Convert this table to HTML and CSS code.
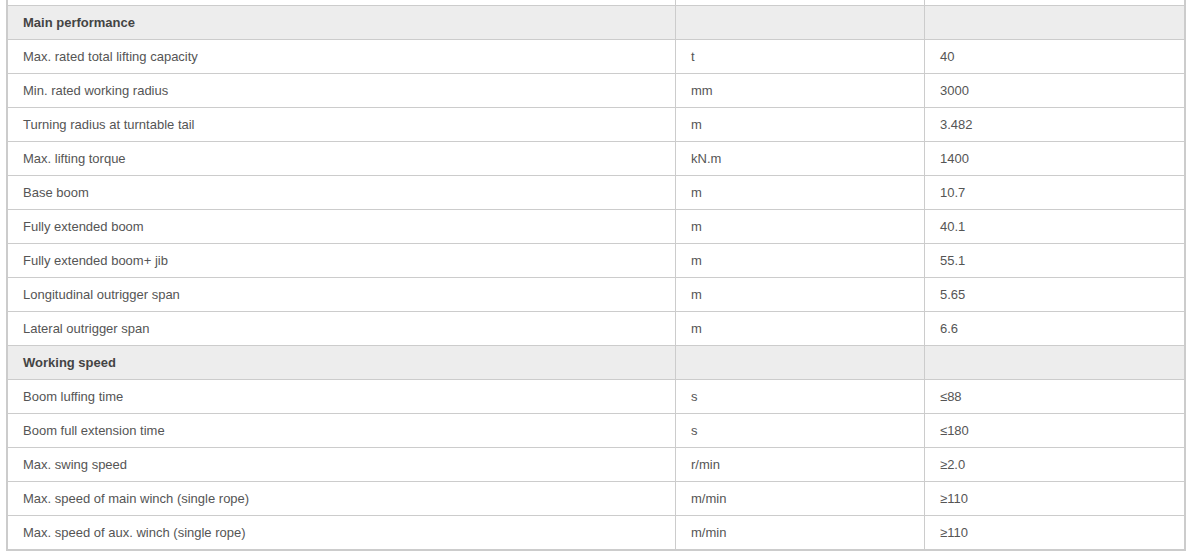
FILE: index.html
```html
<!DOCTYPE html>
<html lang="en">
<head>
<meta charset="utf-8">
<title>Specifications</title>
<link rel="stylesheet" href="styles.css">
</head>
<body>
<div class="spec-wrap">
<table class="spec">
<colgroup><col class="c1"><col class="c2"><col class="c3"></colgroup>
<tbody>
<tr class="prev"><td></td><td></td><td></td></tr>
<tr class="group"><td>Main performance</td><td></td><td></td></tr>
<tr><td>Max. rated total lifting capacity</td><td>t</td><td>40</td></tr>
<tr><td>Min. rated working radius</td><td>mm</td><td>3000</td></tr>
<tr><td>Turning radius at turntable tail</td><td>m</td><td>3.482</td></tr>
<tr><td>Max. lifting torque</td><td>kN.m</td><td>1400</td></tr>
<tr><td>Base boom</td><td>m</td><td>10.7</td></tr>
<tr><td>Fully extended boom</td><td>m</td><td>40.1</td></tr>
<tr><td>Fully extended boom+ jib</td><td>m</td><td>55.1</td></tr>
<tr><td>Longitudinal outrigger span</td><td>m</td><td>5.65</td></tr>
<tr><td>Lateral outrigger span</td><td>m</td><td>6.6</td></tr>
<tr class="group"><td>Working speed</td><td></td><td></td></tr>
<tr><td>Boom luffing time</td><td>s</td><td>≤88</td></tr>
<tr><td>Boom full extension time</td><td>s</td><td>≤180</td></tr>
<tr><td>Max. swing speed</td><td>r/min</td><td>≥2.0</td></tr>
<tr><td>Max. speed of main winch (single rope)</td><td>m/min</td><td>≥110</td></tr>
<tr class="last"><td>Max. speed of aux. winch (single rope)</td><td>m/min</td><td>≥110</td></tr>
</tbody>
</table>
</div>
</body>
</html>
```

FILE: styles.css
```css
html, body {
  margin: 0;
  padding: 0;
  background: #fff;
}
body {
  font-family: "Liberation Sans", Arial, sans-serif;
  font-size: 13px;
  color: #555;
}
.spec-wrap {
  padding-left: 6px;
  overflow: hidden;
  height: 556px;
}
.spec {
  margin-top: -28px;
  width: 1180px;
  table-layout: fixed;
  border-collapse: separate;
  border-spacing: 0;
  border-left: 2px solid #ccc;
  border-right: 2px solid #ccc;
  border-bottom: 2px solid #ccc;
}
.c1 { width: 668px; }
.c2 { width: 249px; }
.c3 { width: 259px; }
.spec td {
  padding: 0 15px;
  box-sizing: border-box;
  border-right: 1px solid #ccc;
  border-bottom: 1px solid #ccc;
  vertical-align: middle;
  line-height: 16px;
  height: 34px;
}
.spec td:last-child {
  border-right: none;
}
.spec tr.last td {
  border-bottom: none;
  height: 33px;
}
.spec tr.group td {
  background: #ededed;
  font-weight: bold;
  color: #444;
}
```
